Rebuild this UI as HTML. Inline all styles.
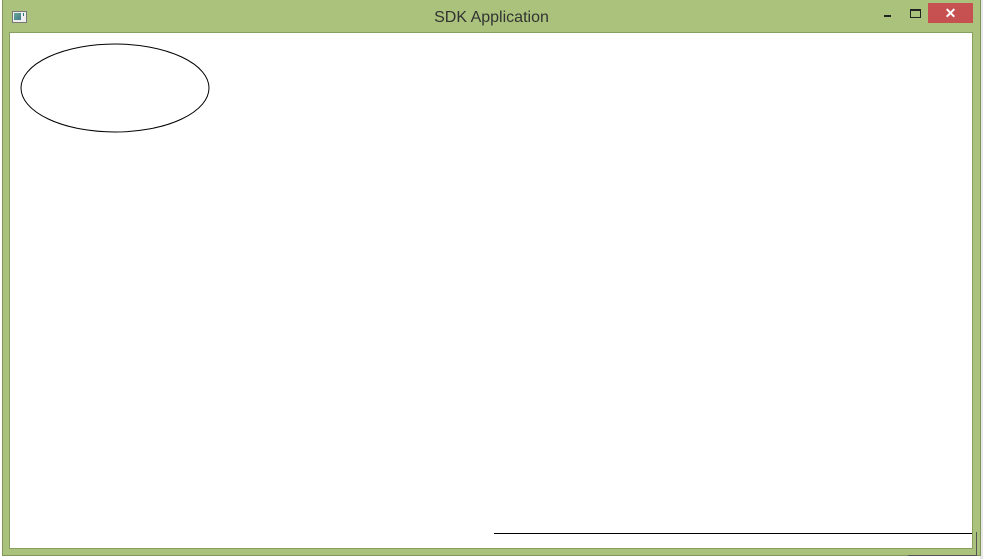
<!DOCTYPE html>
<html><head><style>
html,body{margin:0;padding:0;width:983px;height:559px;overflow:hidden;background:#fff;font-family:"Liberation Sans",sans-serif}
#strip{position:absolute;left:980px;top:0;width:3px;height:559px;background:#e8e8e8}
#frame{position:absolute;left:2px;top:0;width:979px;height:556px;background:#aac27b;border:1px solid #7f955a;border-top:none;box-sizing:border-box}
#client{position:absolute;left:10px;top:33px;width:962px;height:515px;background:#fff;outline:1px solid #86a060}
#title{position:absolute;left:0;top:9px;width:983px;text-align:center;font-size:16px;color:#333}
#close{position:absolute;left:928px;top:3px;width:45px;height:20px;background:#c75050;color:#fff;text-align:center;font-size:14px;line-height:20px;font-weight:bold}
</style></head><body>
<div id="strip"></div>
<div id="frame"></div>
<div style="position:absolute;left:12px;top:11px;width:13px;height:10px;border:1px solid #777;background:#eee"><div style="position:absolute;left:1px;top:1px;width:7px;height:7px;background:linear-gradient(135deg,#6a9,#478)"></div><div style="position:absolute;left:10px;top:1px;width:1px;height:3px;background:#277"></div></div>
<div id="title">SDK Application</div>
<div style="position:absolute;left:884px;top:15px;width:7px;height:2px;background:#222"></div>
<div style="position:absolute;left:910px;top:9px;width:9px;height:6px;border:1px solid #222;border-top-width:2px"></div>
<div id="close">✕</div>
<div id="client">
<svg width="962" height="515" style="position:absolute;left:0;top:0">
<ellipse cx="105" cy="55" rx="94" ry="44" fill="none" stroke="#000" stroke-width="1"/>
<line x1="484" y1="500.5" x2="962" y2="500.5" stroke="#000" stroke-width="1"/>
</svg>
</div>
<div style="position:absolute;left:908px;top:555px;width:68px;height:1px;background:#555"></div>
<div style="position:absolute;left:976px;top:532px;width:1px;height:24px;background:#555"></div>
</body></html>
